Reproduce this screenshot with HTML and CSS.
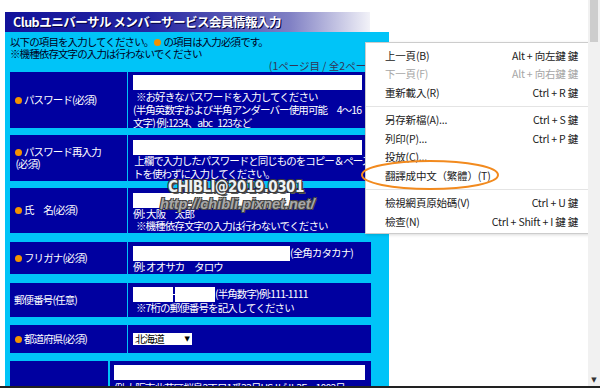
FILE: index.html
```html
<!DOCTYPE html>
<html lang="ja">

<head>
    <meta charset="UTF-8">
    <title>Clubユニバーサル メンバーサービス会員情報入力</title>
    <link rel="stylesheet" href="styles.css">
</head>

<body>
    <div class="window">
        <div class="viewport">
            <div class="page">
                <h1 class="title-bar">Clubユニバーサル メンバーサービス会員情報入力</h1>

                <div class="form-area">
                    <p class="intro">以下の項目を入力してください。<span class="req-dot"></span>の項目は入力必須です。<br>※機種依存文字の入力は行わないでください</p>
                    <p class="page-count">(1ページ目 / 全2ページ)</p>

                    <div class="form-row row-pass">
                        <div class="label-cell"><span class="req-dot"></span>パスワード(必須)</div>
                        <div class="field-cell">
                            <input class="text-box box-wide" type="password">
                            <p class="note">&nbsp;&nbsp;※お好きなパスワードを入力してください<br>(半角英数字および半角アンダーバー使用可能　4～16<br>文字) 例:1234、abc_123など</p>
                        </div>
                    </div>

                    <div class="form-row row-repass">
                        <div class="label-cell"><span><span class="req-dot"></span>パスワード再入力<br>&nbsp;(必須)</span></div>
                        <div class="field-cell">
                            <input class="text-box box-wide" type="password">
                            <p class="note">&nbsp;上欄で入力したパスワードと同じものをコピー＆ペース<br>トを使わずに入力してください。</p>
                        </div>
                    </div>

                    <div class="form-row row-name">
                        <div class="label-cell"><span class="req-dot"></span>氏　名(必須)</div>
                        <div class="field-cell">
                            <input class="text-box box-mid" type="text">
                            <p class="note">例: 大阪　太郎<br>&nbsp;&nbsp;※機種依存文字の入力は行わないでください</p>
                        </div>
                    </div>

                    <div class="form-row row-kana">
                        <div class="label-cell"><span class="req-dot"></span>フリガナ(必須)</div>
                        <div class="field-cell">
                            <div class="inline-line"><input class="text-box box-mid" type="text"><span>(全角カタカナ)</span></div>
                            <p class="note">例: オオサカ　タロウ</p>
                        </div>
                    </div>

                    <div class="form-row row-zip">
                        <div class="label-cell">郵便番号(任意)</div>
                        <div class="field-cell">
                            <div class="inline-line"><input class="text-box box-zip" type="text"><span class="zip-dash"></span><input class="text-box box-zip" type="text"><span>(半角数字)例:111-1111</span></div>
                            <p class="note">&nbsp;&nbsp;※7桁の郵便番号を記入してください</p>
                        </div>
                    </div>

                    <div class="form-row row-pref">
                        <div class="label-cell"><span class="req-dot"></span>都道府県(必須)</div>
                        <div class="field-cell">
                            <div class="select-box"><span>北海道</span><span class="select-arrow">▼</span></div>
                        </div>
                    </div>

                    <div class="form-row row-address">
                        <div class="label-cell"></div>
                        <div class="field-cell">
                            <input class="text-box box-full" type="text">
                            <p class="note">例:大阪市此花区桜島2丁目1番33号USJビル3F　1002号</p>
                        </div>
                    </div>
                </div>

                <!-- watermark over the form -->
                <div class="wm-sign">CHIBLI@2019.0301</div>
                <div class="wm-url">http://chibli.pixnet.net/</div>

                <div class="context-menu">
                    <div class="menu-item"><span>上一頁(B)</span><span>Alt + 向左鍵 鍵</span></div>
                    <div class="menu-item is-disabled"><span>下一頁(F)</span><span>Alt + 向右鍵 鍵</span></div>
                    <div class="menu-item"><span>重新載入(R)</span><span>Ctrl + R 鍵</span></div>
                    <div class="menu-sep"></div>
                    <div class="menu-item"><span>另存新檔(A)...</span><span>Ctrl + S 鍵</span></div>
                    <div class="menu-item"><span>列印(P)...</span><span>Ctrl + P 鍵</span></div>
                    <div class="menu-item"><span>投放(C)...</span></div>
                    <div class="menu-item"><span>翻譯成中文（繁體）(T)</span></div>
                    <div class="menu-sep"></div>
                    <div class="menu-item"><span>檢視網頁原始碼(V)</span><span>Ctrl + U 鍵</span></div>
                    <div class="menu-item"><span>檢查(N)</span><span>Ctrl + Shift + I 鍵 鍵</span></div>
                </div>

                <svg class="highlight-ring" width="140" height="32" viewBox="0 0 140 32">
                    <ellipse cx="70" cy="16" rx="68" ry="14" fill="none" stroke="#f28a1e" stroke-width="2" />
                </svg>
            </div>

            <div class="scrollbar">
                <div class="scroll-thumb"></div>
                <div class="scroll-arrow">▼</div>
            </div>
        </div>
        <div class="frame-edge"></div>
    </div>
</body>

</html>
```

FILE: styles.css
```css
body {
    margin: 0;
    background-color: #ffffff;
    font-family: "Noto Sans CJK JP", sans-serif;
}

.window {
    width: 600px;
    height: 388px;
    display: flex;
    flex-direction: column;
    overflow: hidden;
}

.viewport {
    flex: 1;
    display: flex;
    min-height: 0;
}

.page {
    flex: 1;
    position: relative;
    overflow: hidden;
    padding: 12px 0 0 5px;
}

.title-bar {
    margin: 0;
    width: 357px;
    height: 20px;
    padding-left: 8px;
    background: linear-gradient(90deg, #12129a 0%, #2626a2 40%, #8080c4 78%, #f2f2f8 100%);
    color: #ffffff;
    font-size: 12.5px;
    font-weight: bold;
    letter-spacing: -0.5px;
    line-height: 20px;
    text-shadow: 1px 1px 0 #000040;
    white-space: nowrap;
}

.form-area {
    width: 366px;
    height: 400px;
    padding: 0 13px 0 5px;
    background-color: #00c4f8;
    font-size: 10.5px;
    letter-spacing: -0.9px;
}

.intro {
    margin: 0;
    padding-top: 4px;
    color: #000022;
    line-height: 12px;
    white-space: nowrap;
}

.req-dot {
    display: inline-block;
    width: 7px;
    height: 7px;
    margin: 0 2px 0 1px;
    border-radius: 50%;
    background-color: #f39200;
}

.page-count {
    margin: 0 -4px 0 0;
    color: #333355;
    letter-spacing: 0;
    line-height: 12px;
    text-align: right;
    white-space: nowrap;
}

.form-row {
    display: grid;
    grid-template-columns: 117px 243px;
    column-gap: 1px;
    margin-top: 7px;
}

.row-pass {
    margin-top: 0;
}

.label-cell,
.field-cell {
    background-color: #0000a0;
    color: #ffffff;
    line-height: 12.5px;
    white-space: nowrap;
    overflow: hidden;
}

.label-cell {
    display: flex;
    align-items: center;
    padding-left: 4px;
}

.field-cell {
    padding: 4px 0 0 5px;
}

.note {
    margin: 0;
}

.text-box {
    display: block;
    height: 15px;
    padding: 0;
    border: 0;
    background-color: #ffffff;
}

.box-wide {
    width: 229px;
}

.box-mid {
    width: 157px;
}

.box-zip {
    width: 40px;
}

.box-full {
    width: 251px;
}

.inline-line {
    display: flex;
    align-items: center;
}

.zip-dash {
    width: 2px;
    height: 1px;
    background-color: #ffffff;
}

.row-pass {
    height: 56px;
}

.row-pass .field-cell {
    padding-top: 3px;
}

.row-pass .note {
    line-height: 13px;
}

.row-repass {
    height: 46px;
}

.row-repass .field-cell {
    padding-top: 5px;
}

.row-repass .note {
    letter-spacing: -1px;
}

.row-repass .label-cell {
    line-height: 12px;
}

.row-name {
    height: 45px;
}

.row-name .field-cell {
    padding-top: 5px;
}

.row-name .note {
    line-height: 11.5px;
}

.row-kana {
    height: 32px;
    margin-top: 9px;
}

.row-zip {
    height: 34px;
    margin-top: 9px;
}

.row-zip .note {
    line-height: 11px;
}

.row-pref {
    height: 28px;
    margin-top: 8px;
}

.row-pref .field-cell {
    display: flex;
    align-items: center;
    padding-top: 0;
}

.select-box {
    display: flex;
    justify-content: space-between;
    align-items: center;
    width: 55px;
    height: 12px;
    padding: 0 2px;
    background-color: #ffffff;
    color: #000000;
}

.select-arrow {
    font-size: 7px;
    font-family: "DejaVu Sans", sans-serif;
    letter-spacing: 0;
}

.row-address {
    grid-template-columns: 98px 261px;
    column-gap: 2px;
    height: 40px;
    margin-top: 8px;
}

.row-address .field-cell {
    padding: 4px 0 0 4px;
}

.row-address .note {
    margin-top: 2px;
}

/* watermark */
.wm-sign {
    position: absolute;
    left: 168px;
    top: 178px;
    color: #eef2f4;
    font-family: "DejaVu Sans Condensed", "DejaVu Sans", sans-serif;
    font-size: 15px;
    font-weight: bold;
    letter-spacing: -0.5px;
    text-shadow: -1px -1px 0 #3a3a3a, 1px -1px 0 #3a3a3a, -1px 1px 0 #3a3a3a, 1px 1px 0 #3a3a3a, 2px 2px 0 #555555;
}

.wm-url {
    position: absolute;
    left: 160px;
    top: 196px;
    color: #a8a8a8;
    font-family: "Liberation Sans", sans-serif;
    font-size: 14.5px;
    font-weight: bold;
    font-style: italic;
    text-shadow: -1px -1px 0 #444444, 1px -1px 0 #444444, -1px 1px 0 #444444, 1px 1px 0 #444444;
}

.context-menu {
    position: absolute;
    left: 365px;
    top: 42px;
    width: 223px;
    padding: 3px 0 2px;
    border: 1px solid #cccccc;
    background-color: #ffffff;
    box-shadow: 1px 1px 3px rgba(0, 0, 0, 0.15);
    font-family: "Noto Sans CJK TC", sans-serif;
    font-size: 10.5px;
    letter-spacing: -0.2px;
    color: #222222;
}

.menu-item {
    display: flex;
    justify-content: space-between;
    align-items: center;
    height: 18.5px;
    padding: 0 11px 0 19px;
    white-space: nowrap;
}

.menu-item.is-disabled {
    color: #a6a6a6;
}

.menu-sep {
    height: 1px;
    margin: 4px 0;
    background-color: #e4e4e4;
}

.highlight-ring {
    position: absolute;
    left: 360px;
    top: 159px;
}

.scrollbar {
    width: 12px;
    background-color: #f1f1f1;
    display: flex;
    flex-direction: column;
    justify-content: space-between;
    align-items: center;
}

.scroll-thumb {
    width: 8px;
    height: 42px;
    background-color: #cdcdcd;
}

.scroll-arrow {
    font-family: "DejaVu Sans", sans-serif;
    font-size: 7px;
    line-height: 12px;
    color: #333333;
}

.frame-edge {
    height: 2px;
    background-color: #222222;
}
```
